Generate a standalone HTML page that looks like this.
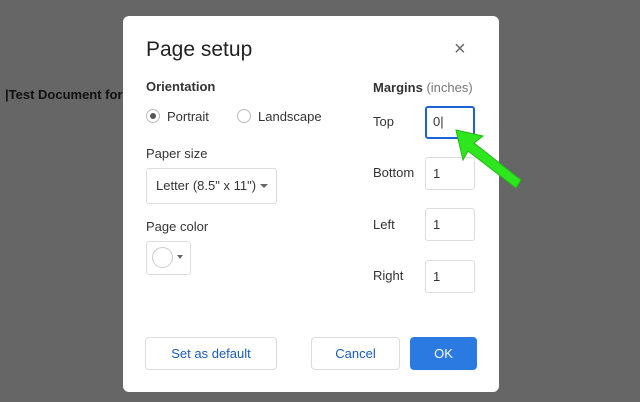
<!DOCTYPE html>
<html><head><style>
body{margin:0;width:640px;height:402px;background:#666;position:relative;overflow:hidden;font-family:"Liberation Sans",sans-serif;}
.a{position:absolute;}
.dlg{left:123px;top:16px;width:376px;height:376px;background:#fff;border-radius:6px;}
.t{color:#222;}
.box{border:1px solid #dadce0;border-radius:3px;background:#fff;}
.lbl{font-size:13px;color:#333;}
.btn{border:1px solid #dadce0;border-radius:4px;color:#1a5bb8;font-size:13px;text-align:center;line-height:31px;}
</style></head><body>
<div class="a" style="left:5px;top:87px;font-size:13px;font-weight:bold;color:#111;">|Test Document for</div>
<div class="a dlg"></div>
<div class="a t" style="left:146px;top:38px;font-size:21px;">Page setup</div>
<div class="a" style="left:454px;top:38px;font-size:20px;color:#666;">×</div>
<div class="a t" style="left:146px;top:79px;font-size:13px;font-weight:bold;color:#333">Orientation</div>
<div class="a" style="left:146px;top:109px;width:12px;height:12px;border:1px solid #bbb;border-radius:50%;"></div>
<div class="a" style="left:150px;top:113px;width:6px;height:6px;background:#555;border-radius:50%;"></div>
<div class="a lbl" style="left:167px;top:109px;">Portrait</div>
<div class="a" style="left:237px;top:109px;width:12px;height:12px;border:1px solid #bbb;border-radius:50%;"></div>
<div class="a lbl" style="left:258px;top:109px;">Landscape</div>
<div class="a t" style="left:146px;top:146px;font-size:13px;color:#333">Paper size</div>
<div class="a box" style="left:146px;top:168px;width:129px;height:34px;"></div>
<div class="a lbl" style="left:156px;top:178px;">Letter (8.5" x 11")</div>
<div class="a" style="left:260px;top:184px;border:4px solid transparent;border-top:4px solid #666;"></div>
<div class="a t" style="left:146px;top:219px;font-size:13px;color:#333">Page color</div>
<div class="a box" style="left:146px;top:241px;width:43px;height:32px;"></div>
<div class="a" style="left:152px;top:247px;width:19px;height:19px;border:1px solid #ccc;border-radius:50%;"></div>
<div class="a" style="left:177px;top:255px;border:3px solid transparent;border-top:4px solid #666;"></div>
<div class="a" style="left:373px;top:80px;font-size:13px;color:#333;"><b>Margins</b> <span style="color:#777">(inches)</span></div>
<div class="a lbl" style="left:373px;top:114px;">Top</div>
<div class="a lbl" style="left:373px;top:165px;">Bottom</div>
<div class="a lbl" style="left:373px;top:217px;">Left</div>
<div class="a lbl" style="left:373px;top:268px;">Right</div>
<div class="a" style="left:425px;top:106px;width:46px;height:29px;border:2px solid #1a63d0;border-radius:3px;"></div>
<div class="a lbl" style="left:433px;top:114px;">0|</div>
<div class="a box" style="left:425px;top:157px;width:48px;height:31px;"></div>
<div class="a lbl" style="left:433px;top:166px;">1</div>
<div class="a box" style="left:425px;top:208px;width:48px;height:31px;"></div>
<div class="a lbl" style="left:433px;top:217px;">1</div>
<div class="a box" style="left:425px;top:260px;width:48px;height:31px;"></div>
<div class="a lbl" style="left:433px;top:269px;">1</div>
<svg class="a" style="left:0;top:0" width="640" height="402"><path d="M456,130 L483,136 L474,143 L521,180 L516,188 L468,151 L463,160 Z" fill="#2ee61e" stroke="#1fb814" stroke-width="1"/></svg>
<div class="a btn" style="left:145px;top:337px;width:130px;height:31px;">Set as default</div>
<div class="a btn" style="left:311px;top:337px;width:87px;height:31px;">Cancel</div>
<div class="a btn" style="left:410px;top:337px;width:67px;height:33px;border:none;background:#2a7ae2;color:#fff;line-height:33px;">OK</div>
</body></html>
